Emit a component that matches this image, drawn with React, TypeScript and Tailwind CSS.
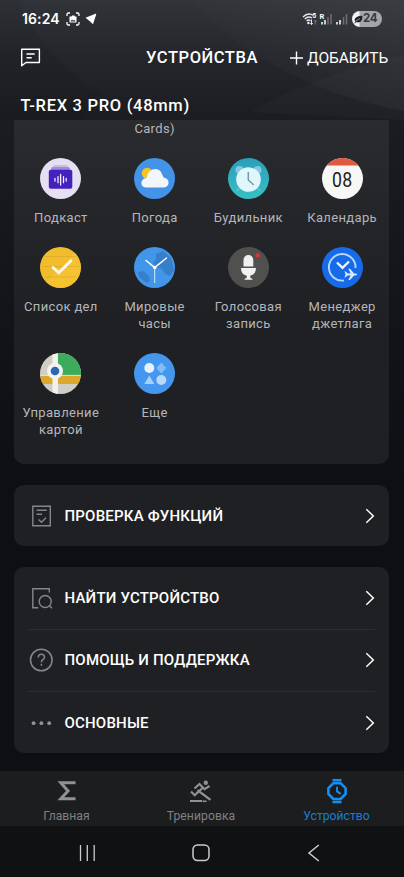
import type { ReactNode } from 'react';

function Backdrop() {
  return (
    <svg className="absolute inset-0 h-full w-full" viewBox="0 0 404 877" fill="none" aria-hidden="true">
      <defs>
        <linearGradient id="bg" x1="0" y1="0" x2="0" y2="877" gradientUnits="userSpaceOnUse">
          <stop offset="0" stopColor="#303338" />
          <stop offset="0.06" stopColor="#25272d" />
          <stop offset="0.14" stopColor="#1a1c21" />
          <stop offset="0.4" stopColor="#121318" />
          <stop offset="0.55" stopColor="#0e0f13" />
          <stop offset="1" stopColor="#0e0f13" />
        </linearGradient>
        <linearGradient id="ray" x1="404" y1="0" x2="230" y2="120" gradientUnits="userSpaceOnUse">
          <stop offset="0" stopColor="#fff" stopOpacity="0.05" />
          <stop offset="1" stopColor="#fff" stopOpacity="0" />
        </linearGradient>
      </defs>
      <path d="M0 0h404v877H0z" fill="url(#bg)" />
      <path d="M190 0Q270 85 404 111V0Z" fill="url(#ray)" />
      <path d="M404 55Q310 77 250 112L404 120Z" fill="#fff" fillOpacity="0.018" />
      <path d="M0 0H18Q38 50 100 94L80 120H0Z" fill="#000" fillOpacity="0.06" />
    </svg>
  );
}

function StatusBar() {
  return (
    <div className="flex h-[38px] shrink-0 items-center pl-[22px] pr-[22px]">
      <span className="font-[Inter,sans-serif] text-[14px] font-semibold leading-none tracking-[0.100px]">16:24</span>
      <svg className="ml-[6px]" width="14" height="14" viewBox="0 0 14 14" fill="none" stroke="#fff" strokeWidth="1.3">
        <path d="M1 4V2.5Q1 1 2.5 1H4M10 1h1.500Q13 1 13 2.500V4M13 10v1.500Q13 13 11.500 13H10M4 13H2.500Q1 13 1 11.500V10" />
        <path d="M3.500 4.500h2l.6-1h2.300l.5 1h1.600v6h-7z" fill="#fff" stroke="none" />
        <path d="m4.300 9.500 1.700-2 1.200 1.200 1-1 1.500 1.800z" fill="#33353a" stroke="none" />
      </svg>
      <svg className="ml-[5px]" width="12" height="12" viewBox="0 0 12 12">
        <path d="M.5 4.700 10.500.7Q11.500.5 11.200 1.500L8 11.200 4.800 8.200Z" fill="#fff" />
      </svg>
      <div className="flex-1" />
      <svg width="48" height="14" viewBox="0 0 48 14" fill="none">
        <g stroke="#e5e5e6" strokeWidth="1.400">
          <path d="M1 5Q6-.2 11.500 3.500M2.800 7Q6.200 3.600 10 6M4.600 9Q6.500 7.200 8.500 8.800" />
        </g>
        <circle cx="6.400" cy="11" r="1.200" fill="#eee" />
        <path d="M9.500 7.500v5m-1.300-1.300 1.300 1.400 1.300-1.400" stroke="#e6e6e8" strokeWidth="1" />
        <path d="M13.300 12.500V8m-1.300 1.500 1.300-1.500 1.300 1.500" stroke="#77797d" strokeWidth="1" />
        <text x="10.500" y="6.300" fill="#fff" fontSize="6.500" fontWeight="700" fontFamily="Roboto, sans-serif">5</text>
        <text x="17.500" y="6.500" fill="#fff" fontSize="7.500" fontWeight="700" fontFamily="Roboto, sans-serif">R</text>
        <path d="M20 12.500V10M23 12.500V8" stroke="#fff" strokeWidth="1.500" />
        <path d="M26 12.500V5M29 12.500V2" stroke="#6e7074" strokeWidth="1.500" />
        <path d="M35 12.500V10M38 12.500V8" stroke="#fff" strokeWidth="1.500" />
        <path d="M41.500 12.500V5M44.500 12.500V2" stroke="#6e7074" strokeWidth="1.500" />
      </svg>
      <div className="ml-[2px] flex h-[16px] w-[30px] items-center overflow-hidden rounded-full bg-[linear-gradient(90deg,#f4f4f4_7px,#a4a5a8_8px)] pl-[2px] text-[#36383d]">
        <svg width="9" height="9" viewBox="0 0 9 9">
          <path d="M.5 5Q1 1 8.500.8 8.500 7.500 4 7.500L2 7 1 8.500.3 8 1.500 6.200Z" fill="#202227" />
          <path d="M2 6 6 3.500" stroke="#bbb" strokeWidth=".7" />
        </svg>
        <span className="font-[Inter,sans-serif] text-[11.500px] font-bold leading-none tracking-[-0.200px]">24</span>
      </div>
    </div>
  );
}

function Header() {
  return (
    <header className="grid h-[40px] shrink-0 grid-cols-[126px_152px_126px] items-center">
      <svg className="ml-[20px]" width="22" height="22" viewBox="0 0 22 22" fill="none" stroke="#fff" strokeWidth="1.400">
        <path d="M1.700 2.200h17.700v13.300H6L1.700 18.800z" strokeLinejoin="round" />
        <path d="M6.500 7h8.200M6.500 10.700h5.200" />
      </svg>
      <h1 className="text-center text-[16.500px] font-medium leading-5 tracking-[0.550px]">УСТРОЙСТВА</h1>
      <button className="flex items-center pl-[12px] text-[15.500px] leading-5">
        <svg width="13" height="14" viewBox="0 0 13 14" stroke="#fff" strokeWidth="1.400">
          <path d="M0 7h13M6.500.5v13" />
        </svg>
        <span className="ml-[4px] whitespace-nowrap tracking-[-0.050px]">ДОБАВИТЬ</span>
      </button>
    </header>
  );
}

function Disc({ children }: { children: ReactNode }) {
  return (
    <svg className="shrink-0 overflow-hidden rounded-full" width="41" height="41" viewBox="0 0 41 41" fill="none">
      {children}
    </svg>
  );
}

const podcast = (
  <Disc>
    <path d="M0 0h41v41H0z" fill="#e4dff2" />
    <rect x="13" y="7" width="15" height="8" rx="2" fill="#c9bde8" />
    <rect x="11" y="9" width="19" height="9" rx="2" fill="#a28bdc" />
    <rect x="8.800" y="11.800" width="23.500" height="19" rx="2" fill="#4420bd" />
    <path d="M15 20.500v2.500M18 18.700v6M20.600 16.500v10.500M23.500 18.700v6M26.200 20.500v2.500" stroke="#f1edff" strokeWidth="1.300" strokeLinecap="round" />
  </Disc>
);

const weather = (
  <Disc>
    <path d="M0 0h41v41H0z" fill="#4394e9" />
    <circle cx="13.200" cy="15.300" r="5.500" fill="#f9c41d" />
    <path d="M12 29.500C5.500 29.500 6 20 12.800 20 14 9 26 8 28.500 17 29.500 19 29 19.500 30.500 19.800 36.500 21 35.500 29.500 30 29.500Z" fill="#f0f6fc" />
  </Disc>
);

const alarm = (
  <Disc>
    <path d="M0 0h41v41H0z" fill="url(#teal)" />
    <defs>
      <linearGradient id="teal" x1="0" y1="0" x2="0" y2="1">
        <stop stopColor="#2c9dbb" />
        <stop offset="1" stopColor="#38bfc2" />
      </linearGradient>
    </defs>
    <circle cx="11.500" cy="12" r="4" fill="#83c9e4" />
    <circle cx="29.500" cy="12" r="4" fill="#83c9e4" />
    <path d="m11 30-2 3m21-3 2 3" stroke="#65bed0" strokeWidth="2" />
    <circle cx="20.500" cy="21.500" r="12.300" fill="#dff7fb" />
    <path d="M20.300 14v8l5.500 5" stroke="#7698a4" strokeWidth="1.500" />
  </Disc>
);

const calendar = (
  <Disc>
    <path d="M0 0h41v41H0z" fill="#f7f7f6" />
    <path d="M0 0h41v7.500H0z" fill="#df5a40" />
    <text x="20.300" y="28.800" textAnchor="middle" fill="#202020" fontSize="20" textLength="20.500" lengthAdjust="spacingAndGlyphs" fontFamily="Roboto, sans-serif">08</text>
  </Disc>
);

const todo = (
  <Disc>
    <path d="M0 0h41v41H0z" fill="#f2bd2d" />
    <path d="M0 41 41 0v41z" fill="#fac836" fillOpacity=".45" />
    <path d="M5 9.500h31M2 19.500h37M5 30h31" stroke="#c99b2a" strokeWidth=".6" strokeOpacity=".7" />
    <path d="m13 20.500 5.800 5.300L31 13.800" stroke="#fffaf0" strokeWidth="2.800" strokeLinecap="round" />
  </Disc>
);

const worldClock = (
  <Disc>
    <path d="M0 0h41v41H0z" fill="#4296e9" />
    <path d="m22 7 7-3 8 7 3 12-4 6-5-2-3-5-6-2-3-4 3-4zM4 25l5-1 6 5 1 5-3 2-8-6z" fill="#2d6fb8" fillOpacity=".6" />
    <path d="m12 13.500 8.700 7L32.500 11" stroke="#fff" strokeWidth="1.600" strokeLinecap="round" />
    <path d="M20.700 20v16" stroke="#d7ebff" strokeWidth="1" />
    <circle cx="20.700" cy="20.500" r="1.700" fill="#fff" />
  </Disc>
);

const voice = (
  <Disc>
    <path d="M0 0h41v41H0z" fill="#50504f" />
    <circle cx="29.700" cy="8.200" r="2.200" fill="#d93232" />
    <path d="M15.500 19.500V13a4.900 4.900 0 0 1 9.800 0v6.500z" fill="#efefef" />
    <path d="M13 21h15q0 6.500-5.500 7.500l-.5 2 2.500 1.500v.8h-8V32l2.500-1.500-.5-2Q13 27.500 13 21z" fill="#f1f1f1" />
  </Disc>
);

const jetlag = (
  <Disc>
    <path d="M0 0h41v41H0z" fill="#176be9" />
    <path d="M33.500 21A13.300 13.300 0 1 0 22 33.500" stroke="#b9d7ff" strokeWidth="1.900" />
    <path d="m15 15.500 5.500 5.300 6.500-6.300" stroke="#f5f9ff" strokeWidth="2.300" />
    <path d="m22.500 24.300 1.200.1 1.800 1.900 3.200.1-2.400-4.700h1.700l4.100 4.800 2.500.2q1.300.7 0 1.500l-2.500.2-4.100 4.500h-1.700l2.400-4.500-3.200.1-1.800 1.800-1.200.1 1-3z" fill="#d9eaff" />
  </Disc>
);

const maps = (
  <Disc>
    <path d="M0 0h41v41H0z" fill="#d0cec4" />
    <path d="M18 0h23v23H18z" fill="#3daa5c" />
    <path d="M0 23h41v8H0z" fill="#dda72b" />
    <path d="M12.500 0h5.500v41h-5.500z" fill="#f3f2ea" />
    <path d="M0 22.400h12.500M18 22.400h23" stroke="#ece5be" />
    <circle cx="15" cy="18" r="8" fill="#f0f3f1" />
    <circle cx="15" cy="18" r="4.300" fill="#2e66af" />
  </Disc>
);

const more = (
  <Disc>
    <path d="M0 0h41v41H0z" fill="#4596ee" />
    <circle cx="15.300" cy="15" r="5" fill="#e4f3ff" />
    <path d="m27.300 9.500 5 5.500-5 5.500-5-5.500z" fill="#82bcf7" />
    <path d="m15.300 22.500 5 8.500h-10z" fill="#a8d1f9" />
    <circle cx="27.300" cy="27" r="5" fill="#b7d9fa" />
  </Disc>
);

const apps: { icon: ReactNode; label: string[] }[] = [
  { icon: podcast, label: ['Подкаст'] },
  { icon: weather, label: ['Погода'] },
  { icon: alarm, label: ['Будильник'] },
  { icon: calendar, label: ['Календарь'] },
  { icon: todo, label: ['Список дел'] },
  { icon: worldClock, label: ['Мировые', 'часы'] },
  { icon: voice, label: ['Голосовая', 'запись'] },
  { icon: jetlag, label: ['Менеджер', 'джетлага'] },
  { icon: maps, label: ['Управление', 'картой'] },
  { icon: more, label: ['Еще'] },
];

function AppGrid() {
  return (
    <section className="h-[344px] shrink-0 rounded-b-[10px] bg-[linear-gradient(180deg,#2a2b2f_0%,#222327_40%,#1f2024_60%,#1f2024_100%)] text-[13px] leading-[17px] tracking-[0.350px] text-[#b5b6b8]">
      <div className="grid grid-cols-4 text-center">
        <span className="col-start-2">Cards)</span>
      </div>
      <div className="mt-[20.500px] grid grid-cols-4 gap-y-[20.500px]">
        {apps.map((app) => (
          <div key={app.label[0]} className="flex flex-col items-center gap-[10.500px]">
            {app.icon}
            <div className="text-center">
              {app.label.map((line) => (
                <div key={line} className="whitespace-nowrap">{line}</div>
              ))}
            </div>
          </div>
        ))}
      </div>
    </section>
  );
}

const checkIcon = (
  <svg width="26" height="26" viewBox="0 0 26 26" fill="none" stroke="#85868a" strokeWidth="1.400">
    <path d="M4.800 3.300h17.500v19.400H4.800zM8.500 7.300h10.300M8.500 11.200h5.500M10.500 16.500l3 2.700 4.500-4.500" />
  </svg>
);

const findIcon = (
  <svg width="26" height="26" viewBox="0 0 26 26" fill="none" stroke="#85868a" strokeWidth="1.400">
    <path d="M21.300 7.500V3.700H4.800v19h5.500" />
    <circle cx="17.200" cy="16.500" r="6" />
    <path d="m21.500 20.800 2.500 2.500" />
  </svg>
);

const helpIcon = (
  <svg width="26" height="26" viewBox="0 0 26 26" fill="none" stroke="#85868a" strokeWidth="1.500">
    <circle cx="13.300" cy="13" r="10.800" />
    <path d="M10.200 10.500q.2-3.200 3.200-3.200t3.100 2.900c0 2.300-3.100 2.100-3.100 5M13.400 16.800v2" />
  </svg>
);

const dotsIcon = (
  <svg width="26" height="26" viewBox="0 0 26 26" fill="#929396">
    <circle cx="5.600" cy="13.200" r="1.900" />
    <circle cx="13.400" cy="13.200" r="1.900" />
    <circle cx="21.200" cy="13.200" r="1.900" />
  </svg>
);

function Row({ icon, label }: { icon: ReactNode; label: string }) {
  return (
    <div className="flex h-full items-center pl-[14px] pr-[14px]">
      {icon}
      <span className="ml-[10.500px] flex-1 whitespace-nowrap text-[15px] font-medium leading-5 tracking-[0.200px]">{label}</span>
      <svg width="10" height="16" viewBox="0 0 10 16" fill="none" stroke="#fff" strokeWidth="1.500">
        <path d="m1.300 1.300 7 6.700-7 6.700" />
      </svg>
    </div>
  );
}

function TabBar() {
  return (
    <nav className="grid h-[55px] shrink-0 grid-cols-[133px_136px_135px] bg-[#1c1d1f] text-[12.200px] leading-[16px] text-[#7f8082]">
      <div className="flex flex-col items-center pt-[7px]">
        <svg width="26" height="26" viewBox="0 0 26 26" fill="none" stroke="#909193" strokeWidth="3">
          <path d="M21.500 4.700H6.800L14 13l-7.200 7.700h14.700" />
        </svg>
        <span className="mt-[4px]">Главная</span>
      </div>
      <div className="flex flex-col items-center pt-[7px]">
        <svg width="26" height="26" viewBox="0 0 26 26" fill="none" stroke="#909193" strokeWidth="2.200">
          <circle cx="17.800" cy="4.700" r="2.200" fill="#909193" stroke="none" />
          <path d="M6.500 10.500 11.500 6l5 5.200L21.500 8M15 9.500 9.300 15M9.500 12l4.500 3.500 8.500 6.300M3 13.500l3.700 3.800 4.500-4.600M2 23h12" />
          <path d="M14.500 23.300h4" strokeWidth="1.600" />
        </svg>
        <span className="mt-[4px] tracking-[0.050px]">Тренировка</span>
      </div>
      <div className="flex flex-col items-center pt-[7px] text-[#147fd5]">
        <svg width="26" height="26" viewBox="0 0 26 26" fill="none" stroke="#168ef0" strokeWidth="2.600">
          <path d="M8.500 2.200h9M8.500 24h9" strokeWidth="2.600" />
          <path d="m9.400 5.200h7.200l5 5v5.800l-5 5H9.400l-5-5v-5.800z" strokeLinejoin="round" />
          <path d="M13 8.700v4.700l3.700 2.500" strokeWidth="1.900" />
        </svg>
        <span className="mt-[4px]">Устройство</span>
      </div>
    </nav>
  );
}

function SystemNav() {
  return (
    <div className="grid h-[51px] shrink-0 grid-cols-[144px_113px_147px] items-center bg-[#101113] pt-[2px]">
      <svg className="ml-[78px]" width="18" height="18" viewBox="0 0 18 18" stroke="#ccc" strokeWidth="1.300">
        <path d="M2.500 1v16M9.300 1v16M16.200 1v16" />
      </svg>
      <svg className="mx-auto" width="18" height="18" viewBox="0 0 18 18" fill="none" stroke="#ccc" strokeWidth="1.500">
        <rect x="1" y="1" width="16" height="15.500" rx="4.500" />
      </svg>
      <svg className="ml-[50px]" width="14" height="18" viewBox="0 0 14 18" fill="none" stroke="#ccc" strokeWidth="1.500">
        <path d="M11.800 1 2 9l9.800 8" />
      </svg>
    </div>
  );
}

export default function App() {
  return (
    <div className="relative h-[877px] w-[404px] overflow-hidden bg-[#0e0f13] font-[Roboto,sans-serif] text-white">
      <Backdrop />
      <div className="relative flex h-full flex-col">
        <StatusBar />
        <Header />
        <h2 className="flex h-[42px] shrink-0 items-center pl-[20.500px] pt-[13px] text-[16.500px] font-medium leading-5 tracking-[0.700px]">
          T-REX 3 PRO (48mm)
        </h2>
        <main className="flex flex-1 flex-col gap-[21px] pl-[14px] pr-[15px]">
          <AppGrid />
          <section className="h-[61px] shrink-0 rounded-[10px] bg-[#1f2024]">
            <Row icon={checkIcon} label="ПРОВЕРКА ФУНКЦИЙ" />
          </section>
          <section className="grid h-[186px] shrink-0 grid-rows-[61.500px_1px_61.500px_1px_61px] rounded-[10px] bg-[#1f2024]">
            <Row icon={findIcon} label="НАЙТИ УСТРОЙСТВО" />
            <div className="mx-[14px] bg-[#2d2e31]" />
            <Row icon={helpIcon} label="ПОМОЩЬ И ПОДДЕРЖКА" />
            <div className="mx-[14px] bg-[#2d2e31]" />
            <Row icon={dotsIcon} label="ОСНОВНЫЕ" />
          </section>
        </main>
        <TabBar />
        <SystemNav />
      </div>
    </div>
  );
}
